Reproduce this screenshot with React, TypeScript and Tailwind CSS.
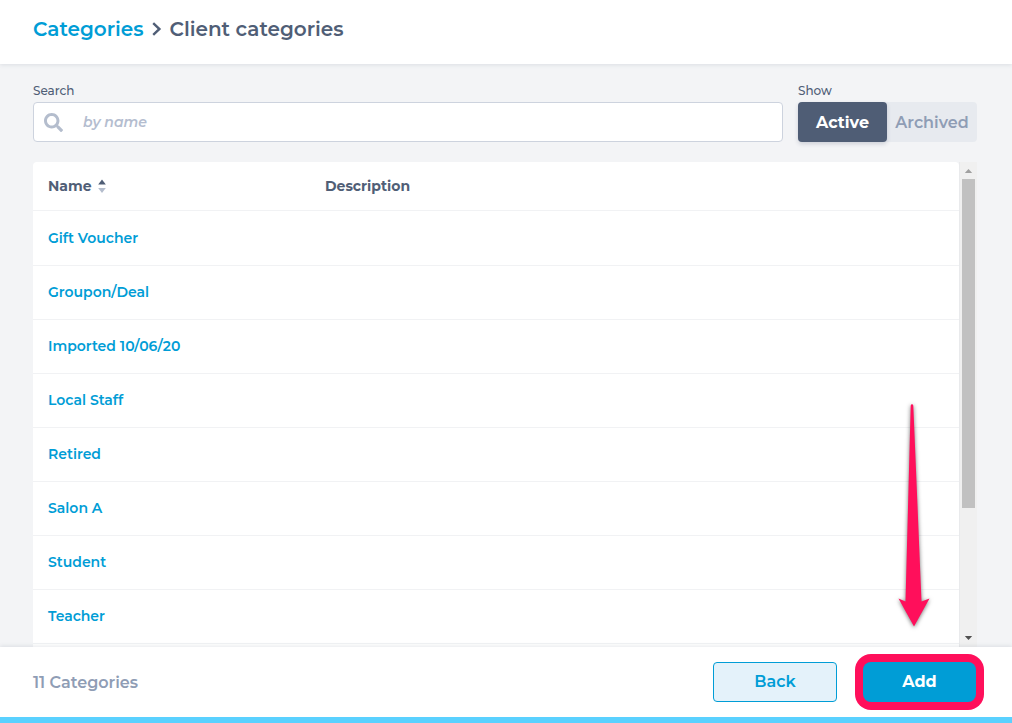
import { useState } from "react";
import { FaSearch } from "react-icons/fa";

const categories = [
  "Gift Voucher",
  "Groupon/Deal",
  "Imported 10/06/20",
  "Local Staff",
  "Retired",
  "Salon A",
  "Student",
  "Teacher",
];

function Header() {
  return (
    <header className="relative z-10 flex h-16 shrink-0 items-start bg-white px-[33px] pt-[15px] shadow-[0_1px_4px_rgba(60,70,100,0.12)]">
      <nav aria-label="Breadcrumb" className="flex items-center text-xl leading-7 font-semibold">
        <a href="#categories" className="text-[#009dd6]">
          Categories
        </a>
        <svg viewBox="0 0 10 14" className="mx-2 h-3.5 w-2.5" fill="none" stroke="#505e76" strokeWidth="2.4" aria-hidden="true">
          <path d="M1.2 1.2 7.4 7l-6.2 5.8" />
        </svg>
        <h1>Client categories</h1>
      </nav>
    </header>
  );
}

function Filters() {
  const [show, setShow] = useState("Active");
  const on = "bg-[#4f5d75] font-bold text-white shadow-[0_2px_4px_rgba(60,70,100,0.2)]";
  const off = "font-semibold text-[#8f9db5]";
  return (
    <div className="flex gap-[15px]">
      <div className="min-w-0 flex-1">
        <label htmlFor="search" className="block pb-[3px] text-xs leading-4 font-medium">
          Search
        </label>
        <div className="flex h-10 items-center rounded border border-[#cdd3de] bg-white pl-2.5">
          <FaSearch className="size-[19px] shrink-0 text-[#b4bdcd]" aria-hidden="true" />
          <input
            id="search"
            type="search"
            placeholder="by name"
            className="h-full min-w-0 flex-1 bg-transparent px-5 text-sm outline-none placeholder:font-semibold placeholder:text-[#b4bdcf] placeholder:italic"
          />
        </div>
      </div>
      <div className="w-[179px]" role="group" aria-labelledby="show-label">
        <div id="show-label" className="pb-[3px] text-xs leading-4 font-medium">
          Show
        </div>
        <div className="grid h-10 grid-cols-[89px_1fr] rounded bg-[#e7eaef] text-base">
          {["Active", "Archived"].map((name) => (
            <button
              key={name}
              type="button"
              aria-pressed={show === name}
              onClick={() => setShow(name)}
              className={`rounded pt-px ${show === name ? on : off}`}
            >
              {name}
            </button>
          ))}
        </div>
      </div>
    </div>
  );
}

function ScrollBar() {
  return (
    <div className="flex w-[18px] shrink-0 flex-col border-l border-[#e9eaec] bg-[#f0f0f0]" aria-hidden="true">
      <svg viewBox="0 0 17 17" className="size-[17px] shrink-0" fill="#a0a0a0">
        <path d="M4.8 11 8.5 7l3.7 4z" />
      </svg>
      <div className="flex-1 px-0.5">
        <div className="h-[73%] bg-[#c1c1c1]" />
      </div>
      <svg viewBox="0 0 17 17" className="size-[17px] shrink-0" fill="#505050">
        <path d="M4.8 6h7.4l-3.7 4z" />
      </svg>
    </div>
  );
}

function CategoryTable() {
  return (
    <section className="mt-5 flex min-h-0 flex-1">
      <div className="min-w-0 flex-1 overflow-hidden rounded-t bg-white">
        <table className="w-full table-fixed border-collapse text-left text-sm">
          <colgroup>
            <col className="w-[277px]" />
            <col />
          </colgroup>
          <thead className="font-bold">
            <tr className="h-12 border-b border-[#f1f2f4]">
              <th scope="col" className="px-[15px]">
                <button type="button" className="flex items-center gap-1.5">
                  Name
                  <svg viewBox="0 0 8 14" className="h-3.5 w-2" aria-hidden="true">
                    <path d="M.2 5.4 4 .4l3.8 5z" fill="#4f5d75" />
                    <path d="M.2 9 4 14l3.8-5z" fill="#b4bdcd" />
                  </svg>
                </button>
              </th>
              <th scope="col" className="px-[15px]">
                Description
              </th>
            </tr>
          </thead>
          <tbody>
            {categories.map((name) => (
              <tr key={name} className="h-[54px] border-b border-[#f1f2f4] first:h-[55px]">
                <td className="px-[15px] font-semibold">
                  <a href="#category" className="text-[#009dd6]">
                    {name}
                  </a>
                </td>
                <td />
              </tr>
            ))}
          </tbody>
        </table>
      </div>
      <ScrollBar />
    </section>
  );
}

function Footer() {
  return (
    <footer className="relative z-10 flex h-[76px] shrink-0 items-center border-b-6 border-[#5ad1ff] bg-white pr-9 pl-[33px] text-base shadow-[0_-1px_4px_rgba(60,70,100,0.12)]">
      <p className="flex-1 pt-px font-semibold text-[#8f9db5]">11 Categories</p>
      <button
        type="button"
        className="mr-[26px] h-10 w-[124px] rounded border border-[#009dd6] bg-[#e4f2fa] font-semibold text-[#009dd6]"
      >
        Back
      </button>
      <div className="relative">
        <button type="button" className="h-10 w-[113px] rounded-lg bg-[#009dd6] font-bold text-white ring-8 ring-[#ff0f5b]">
          Add
        </button>
        <svg
          viewBox="0 0 40 230"
          className="absolute right-[42px] bottom-[71px] h-[230px] w-10 drop-shadow-[0_1px_2px_rgba(0,0,0,0.55)]"
          fill="#ff0f5b"
          aria-hidden="true"
        >
          <path d="M16.7 4.5Q18 1.5 19.3 4.5L27.5 200.5 35.5 197.5 20 225.5 4.5 197.5 11.5 200.5Z" />
        </svg>
      </div>
    </footer>
  );
}

export default function App() {
  return (
    <div className="flex h-screen flex-col overflow-hidden bg-[#f3f4f6] font-['Montserrat','Inter',sans-serif] text-[#505e76]">
      <Header />
      <main className="flex min-h-0 flex-1 flex-col pt-[19px] pr-[35px] pl-[33px]">
        <Filters />
        <CategoryTable />
      </main>
      <Footer />
    </div>
  );
}
